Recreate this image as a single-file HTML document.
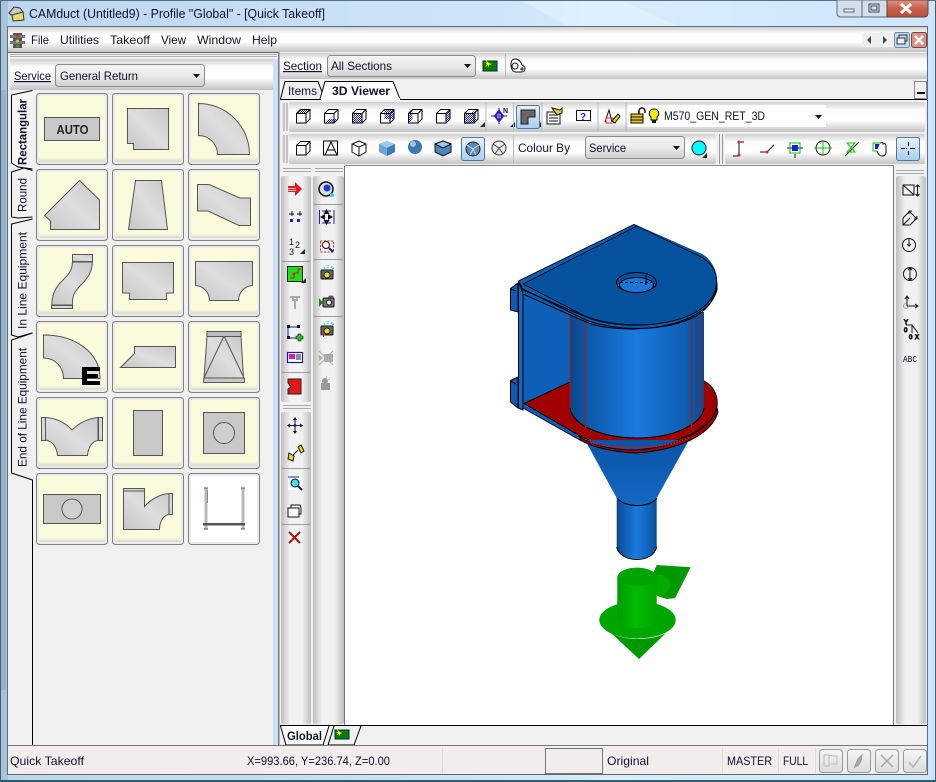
<!DOCTYPE html>
<html><head><meta charset="utf-8"><title>CAMduct</title>
<style>html,body{margin:0;padding:0;background:#cfe4f7;width:936px;height:782px;overflow:hidden}
svg{display:block;position:absolute;left:0;top:0}
text{font-family:"Liberation Sans",sans-serif;font-size:12px;fill:#10102a}</style></head><body>
<svg width="936" height="782" viewBox="0 0 936 782" xmlns="http://www.w3.org/2000/svg">
<defs>
<pattern id="dith" width="2" height="2" patternUnits="userSpaceOnUse"><rect width="2" height="2" fill="#fff"/><rect width="1" height="1" fill="#1414d8"/><rect x="1" y="1" width="1" height="1" fill="#1414d8"/></pattern>
<linearGradient id="glass" x1="0" y1="0" x2="1" y2="0"><stop offset="0" stop-color="#bcd6ee"/><stop offset=".3" stop-color="#c6def4"/><stop offset=".55" stop-color="#cfe5f9"/><stop offset=".65" stop-color="#d8ecfd"/><stop offset="1" stop-color="#cfe5fb"/></linearGradient>
<linearGradient id="hbar" x1="0" y1="0" x2="0" y2="1"><stop offset="0" stop-color="#cfcfcf"/><stop offset=".25" stop-color="#fbfbfb"/><stop offset=".6" stop-color="#fff"/><stop offset="1" stop-color="#c4c4c4"/></linearGradient>
<linearGradient id="vbar" x1="0" y1="0" x2="1" y2="0"><stop offset="0" stop-color="#bdbdbd"/><stop offset=".3" stop-color="#f1f1f1"/><stop offset=".7" stop-color="#f1f1f1"/><stop offset="1" stop-color="#bdbdbd"/></linearGradient>
<linearGradient id="combo" x1="0" y1="0" x2="0" y2="1"><stop offset="0" stop-color="#f4f4f4"/><stop offset=".5" stop-color="#eaeaea"/><stop offset="1" stop-color="#cfcfcf"/></linearGradient>
<linearGradient id="gs" x1="0" y1="1" x2="1" y2="0"><stop offset="0" stop-color="#c6c6c6"/><stop offset=".5" stop-color="#dedede"/><stop offset="1" stop-color="#c8c8c8"/></linearGradient>
<linearGradient id="yb" x1="0" y1="0" x2="0" y2="1"><stop offset="0" stop-color="#fafadc"/><stop offset=".93" stop-color="#fafadc"/><stop offset="1" stop-color="#d8d8d0"/></linearGradient>
<linearGradient id="cyl" x1="0" y1="0" x2="1" y2="0"><stop offset="0" stop-color="#094685"/><stop offset=".12" stop-color="#0d57a6"/><stop offset=".5" stop-color="#1b7ade"/><stop offset=".85" stop-color="#0f5fb3"/><stop offset="1" stop-color="#0a4b90"/></linearGradient>
<linearGradient id="cone" x1="0" y1="0" x2="0" y2="1"><stop offset="0" stop-color="#0a54a6"/><stop offset="1" stop-color="#1468c2"/></linearGradient>
<linearGradient id="gc" x1="0" y1="0" x2="1" y2="0"><stop offset="0" stop-color="#009a00"/><stop offset=".45" stop-color="#00bc00"/><stop offset="1" stop-color="#00a400"/></linearGradient>
<linearGradient id="act" x1="0" y1="0" x2="0" y2="1"><stop offset="0" stop-color="#e8f2fb"/><stop offset="1" stop-color="#a8cdec"/></linearGradient>
<linearGradient id="sb" x1="0" y1="0" x2="0" y2="1"><stop offset="0" stop-color="#f6f6f6"/><stop offset="1" stop-color="#dcdcdc"/></linearGradient>
<linearGradient id="red" x1="0" y1="0" x2="0" y2="1"><stop offset="0" stop-color="#e09488"/><stop offset=".5" stop-color="#c8604c"/><stop offset="1" stop-color="#b84c3a"/></linearGradient>
<g id="btn"><rect x=".5" y=".5" width="71" height="71" rx="3" fill="#ececec" stroke="#808080"/><rect x="3" y="3" width="66" height="66" fill="url(#yb)"/></g>
<g id="cube" fill="none" stroke="#000"><path d="M-6.500 -2.500h9.500v9.500h-9.500zM-6.500 -2.500l4-4h9.500v9.500l-4 4M3 -2.500l4-4"/></g>
</defs>

<rect width="936" height="782" fill="url(#glass)"/>
<path d="M520 0h100l60 27h-110z" fill="#e2f1fe" opacity=".6"/>
<rect x="0" y="0" width="8" height="782" fill="#a9c3db"/>
<rect x="1" y="90" width="5" height="600" fill="#8ea6bc" opacity=".6"/>
<rect x="0" y="0" width="1" height="782" fill="#46606e"/>
<rect x="935" y="0" width="1" height="782" fill="#46606e"/>
<rect x="0" y="780" width="936" height="2" fill="#2a6070"/>
<rect x="0" y="0" width="936" height="1" fill="#56707e"/>

<path d="M9 13l5-6 6 1 3 4-2 3H11z" fill="#c8c8c8" stroke="#333"/><path d="M12 15l11-3 1 8-11 1z" fill="#e6dc6a" stroke="#333"/>
<text x="29" y="18" style="font-size:12.5px" textLength="296" lengthAdjust="spacingAndGlyphs">CAMduct (Untitled9) - Profile "Global" - [Quick Takeoff]</text>

<path d="M837 0h25v17h-21q-4 0-4-4z" fill="#d3dee9" stroke="#5c6f80"/>
<rect x="844" y="9" width="10" height="3" fill="#eef" stroke="#5d6b78"/>
<rect x="862" y="0" width="25" height="17" fill="#d3dee9" stroke="#5c6f80"/>
<rect x="869" y="4" width="10" height="8" fill="none" stroke="#46525e"/><rect x="871" y="6" width="6" height="4" fill="none" stroke="#46525e"/>
<path d="M887 0h41v13q0 4-4 4h-37z" fill="url(#red)" stroke="#5c4444"/>
<path d="M901 4l10 9M911 4l-10 9" stroke="#fff" stroke-width="3"/>

<rect x="7.500" y="26.500" width="920" height="748" fill="#f0f0f0" stroke="#5f6f7a"/>
<rect x="8" y="27" width="919" height="25" fill="url(#hbar)"/>
<g transform="translate(10,33)"><rect x="3" y="0" width="9" height="15" fill="#555"/><rect x="0" y="2" width="15" height="3" fill="#777"/><rect x="0" y="8" width="15" height="3" fill="#777"/><circle cx="7.500" cy="3" r="1.500" fill="#c33"/><circle cx="7.500" cy="8" r="1.500" fill="#cc3"/><circle cx="7.500" cy="13" r="1.500" fill="#3a3"/></g>
<text x="31" y="44" textLength="18" lengthAdjust="spacingAndGlyphs">File</text>
<text x="60" y="44" textLength="39" lengthAdjust="spacingAndGlyphs">Utilities</text>
<text x="110" y="44" textLength="40" lengthAdjust="spacingAndGlyphs">Takeoff</text>
<text x="161" y="44" textLength="25" lengthAdjust="spacingAndGlyphs">View</text>
<text x="197" y="44" textLength="44" lengthAdjust="spacingAndGlyphs">Window</text>
<text x="252" y="44" textLength="25" lengthAdjust="spacingAndGlyphs">Help</text>
<rect x="862" y="33" width="32" height="14" fill="#efefef"/>
<path d="M871 36v8l-4-4zM883 36v8l4-4z" fill="#444"/>
<rect x="894.500" y="32.500" width="15" height="15" rx="2" fill="#c6dcf0" stroke="#6e8aa4"/>
<rect x="899" y="35" width="8" height="6" fill="none" stroke="#333"/><rect x="897" y="38" width="8" height="6" fill="#e8f0f8" stroke="#333"/>
<rect x="911.500" y="32.500" width="15" height="15" rx="2" fill="#d88f84" stroke="#7a4a4a"/>
<path d="M915 36l8 8M923 36l-8 8" stroke="#fff" stroke-width="2.500"/>

<!-- left panel -->
<rect x="8" y="52" width="270" height="693" fill="#f0f0f0"/>
<path d="M8 52.500H279" stroke="#666"/>
<path d="M10 54.500h267M10 56.500h267" stroke="#b0b0b0"/>
<rect x="10" y="59" width="263" height="31" fill="url(#hbar)"/>
<text x="14" y="80" textLength="37" lengthAdjust="spacingAndGlyphs" text-decoration="underline">Service</text>
<rect x="55.500" y="64.500" width="149" height="22" rx="3" fill="url(#combo)" stroke="#8a8a8a"/>
<text x="60" y="80" textLength="78" lengthAdjust="spacingAndGlyphs">General Return</text>
<path d="M193 74h7l-3.500 4z" fill="#111"/>
<rect x="273" y="59" width="5" height="686" fill="#cbe1f6"/>
<rect x="278" y="52" width="1.500" height="693" fill="#777"/>

<!-- tabs -->
<path d="M32.500 90.500L11.500 95V163L18 167L32.500 169" fill="#f4f4f4" stroke="#000"/>
<path d="M32.500 170.500L24 168L11.500 172V217L18 218L32.500 217" fill="#f0f0f0" stroke="#000"/>
<path d="M32.500 219L11.500 224V335L18 337L32.500 333" fill="#f0f0f0" stroke="#000"/>
<path d="M32.500 333L11.500 340V473L32.500 480V745" fill="#f0f0f0" stroke="#000"/>
<text transform="translate(26.500,165) rotate(-90)" textLength="66" lengthAdjust="spacingAndGlyphs" style="font-weight:bold">Rectangular</text>
<text transform="translate(26.500,212) rotate(-90)" textLength="34" lengthAdjust="spacingAndGlyphs">Round</text>
<text transform="translate(26.500,329) rotate(-90)" textLength="97" lengthAdjust="spacingAndGlyphs">In Line Equipment</text>
<text transform="translate(26.500,467) rotate(-90)" textLength="119" lengthAdjust="spacingAndGlyphs">End of Line Equipment</text>

<use href="#btn" x="36" y="93"/><use href="#btn" x="112" y="93"/><use href="#btn" x="188" y="93"/>
<use href="#btn" x="36" y="169"/><use href="#btn" x="112" y="169"/><use href="#btn" x="188" y="169"/>
<use href="#btn" x="36" y="245"/><use href="#btn" x="112" y="245"/><use href="#btn" x="188" y="245"/>
<use href="#btn" x="36" y="321"/><use href="#btn" x="112" y="321"/><use href="#btn" x="188" y="321"/>
<use href="#btn" x="36" y="397"/><use href="#btn" x="112" y="397"/><use href="#btn" x="188" y="397"/>
<use href="#btn" x="36" y="473"/><use href="#btn" x="112" y="473"/>
<rect x="188.500" y="473.500" width="71" height="71" rx="3" fill="#ececec" stroke="#808080"/><rect x="191" y="476" width="66" height="66" fill="#fff"/>
<g fill="url(#gs)" stroke="#555" stroke-width="1">
<rect x="44.500" y="117.500" width="55" height="23" fill="#c8c8c8"/>
<path d="M127.500 108.500H168.500V149.500H133.500V143.500H127.500Z"/>
<path d="M198.500 103.500A51 51 0 0 1 249.500 154.500H217.500A19 19 0 0 0 198.500 135.500Z"/>
<path d="M44.500 215.500L79.500 180.500L99.500 200V229.500H50.500V221Z"/>
<path d="M135.500 180.500H161.500L167.500 229.500H128.500Z"/>
<path d="M197.500 184.500H209L240 198H250.500V225.500H239L208 211H197.500Z"/>
<path d="M72.500 262C72 272 68 275 60 283C54 290 52 296 51.700 305H72.500C72 297 74 292 80 286C88 278 92 272 92.500 262Z"/>
<rect x="72.500" y="254.500" width="20" height="7"/><rect x="51.500" y="305.500" width="21" height="3"/>
<path d="M122.500 262.500H173.500V293H166.500V299.500H129.500V293H122.500Z"/>
<path d="M195.500 261.500H252.500V285.500C245 286 238.500 292 238.500 300.500H209.500C209.500 292 203 286 195.500 285.500Z"/>
<path d="M43.500 335C75 335 100 352 100 378.500H63.500C63.500 367 55 358 43.500 358Z"/>
<path d="M134.500 346.500H175.500V367.500H120.500L134.500 353.500Z"/>
<path d="M207 336H241L243.500 378H204Z"/><rect x="207" y="331.500" width="34" height="5" fill="#bdbdbd"/>
<path d="M224 336L204 378M224 336L244 378" fill="none"/><rect x="203.500" y="378" width="41" height="4.500" rx="1" fill="#c8c8c8"/>
<path d="M45.500 417.500C55 418 65 422 72 430C80 422 90 418 98 417.500V440.500C92 441 88 448 87.500 455.500H57.500C57 447 52 441 45.500 440Z"/>
<rect x="41.500" y="417.500" width="4" height="23"/><rect x="98.500" y="417.500" width="4" height="23"/>
<rect x="133.500" y="410.500" width="29" height="45" fill="#c8c8c8"/>
<rect x="203.500" y="412.500" width="41" height="41" fill="#c8c8c8"/><circle cx="224" cy="433" r="10.500" fill="#cfcfcf"/>
<rect x="43.500" y="494.500" width="57" height="29" fill="#c8c8c8"/><circle cx="72" cy="509" r="10" fill="#cfcfcf"/>
<path d="M123.500 490.500V529.500H159.500C159.500 521 164 515 169 514.500H172.500V493.500H169C160 494 150 500 144.500 506.500V490.500Z"/>
<rect x="123.500" y="488.500" width="21" height="2.500"/><rect x="169" y="493.500" width="3.500" height="21"/>
</g>
<text x="56.500" y="134" textLength="32" lengthAdjust="spacingAndGlyphs" style="font-weight:bold;font-size:13px;fill:#222">AUTO</text>
<path d="M82 367h18v4h-13v3h11v4h-11v3h13v4h-18z" fill="#000"/>
<path d="M206 488v41M243 488v41" stroke="#b8b8b8" stroke-width="3"/><path d="M204 488h4M241 488h4M204 529h4M241 529h4" stroke="#555"/>
<rect x="203" y="523" width="42" height="2.500" fill="#555"/><path d="M207.500 490v13" stroke="#6a8cb0"/>

<!-- Section row -->
<rect x="280" y="53" width="647" height="26" fill="url(#hbar)"/>
<text x="283" y="70" textLength="39" lengthAdjust="spacingAndGlyphs" text-decoration="underline">Section</text>
<rect x="327.500" y="55.500" width="148" height="21" rx="3" fill="url(#combo)" stroke="#8a8a8a"/>
<text x="331" y="70" textLength="61" lengthAdjust="spacingAndGlyphs">All Sections</text>
<path d="M464 64h7l-3.500 4z" fill="#111"/>
<path d="M505.500 54v25" stroke="#bbb"/>
<rect x="483" y="61" width="14" height="10" fill="#0a7a0a" stroke="#033"/><path d="M486 60l1 3-3-1 3 2-2 3 3-2 1 3v-3l3-1-3-1z" fill="#ff0"/>
<path d="M515 59c4 0 6 3 7 6 3 1 3 3 3 4 0 2-2 3-4 3h-5c-3 0-5-3-5-7 0-4 1-6 4-6z" fill="#fff" stroke="#111"/><circle cx="515" cy="66" r="3" fill="none" stroke="#111"/><circle cx="522" cy="69" r="1" fill="none" stroke="#111"/>

<!-- tab row -->
<rect x="280" y="79" width="647" height="21" fill="#f0f0f0"/>
<path d="M280 99.500H927" stroke="#000"/>
<path d="M280.500 99L285 81.500H318L322 92" fill="#f0f0f0" stroke="#000"/>
<path d="M320 99L325 81.500H393L400 99" fill="#fff" stroke="#000"/>
<rect x="321" y="98" width="79" height="3" fill="#fff"/>
<text x="288" y="95" textLength="29" lengthAdjust="spacingAndGlyphs">Items</text>
<text x="332" y="95" textLength="58" lengthAdjust="spacingAndGlyphs" style="font-weight:bold">3D Viewer</text>
<rect x="914.500" y="81.500" width="12" height="17" fill="#f0f0f0" stroke="#888"/><rect x="917" y="92" width="8" height="2" fill="#000"/>

<!-- toolbars -->
<rect x="280" y="100" width="647" height="66" fill="#efefef"/>
<path d="M284 103v28M287 103v28M284 135v28M287 135v28" stroke="#999"/>
<rect x="289" y="102" width="636" height="30" rx="2" fill="url(#hbar)"/>
<rect x="289" y="134" width="427" height="30" rx="2" fill="url(#hbar)"/>
<rect x="725" y="134" width="200" height="30" rx="2" fill="url(#hbar)"/>
<path d="M719.500 134v30M722.500 134v30" stroke="#999"/>
<!-- hatched cubes -->
<path d="M296.500 113.500l4-4h9.500l-4 4z" fill="url(#dith)"/><use href="#cube" x="303" y="116"/>
<path d="M324.500 123l4-4h9.500l-4 4z" fill="url(#dith)"/><use href="#cube" x="331" y="116"/>
<rect x="352.500" y="113.500" width="9.500" height="9.500" fill="url(#dith)"/><use href="#cube" x="359" y="116"/>
<rect x="384.500" y="109.500" width="9.500" height="9.500" fill="url(#dith)"/><use href="#cube" x="387" y="116"/>
<path d="M408.500 113.500l4-4v9.500l-4 4z" fill="url(#dith)"/><use href="#cube" x="415" y="116"/>
<path d="M446 113.500l4-4v9.500l-4 4z" fill="url(#dith)"/><use href="#cube" x="443" y="116"/>
<path d="M465 113h6l5 -3v10l-5 4h-6z" fill="url(#dith)"/><use href="#cube" x="471" y="116"/>
<path d="M480 127h5v-5zM510 127h5v-5zM536 127h5v-5z" fill="#222"/>
<path d="M486 103v28M513.500 103v28M542 103v28M598 103v28M626 103v28" stroke="#bbb"/>
<path d="M499 108v16M491 116h16" stroke="#1a1ad0"/><path d="M499 111l4 5-4 5-4-5z" fill="none" stroke="#1a1ad0" stroke-width="2"/><circle cx="499" cy="116" r="1.500" fill="#e22"/><text x="503" y="113" style="font-size:7px;font-weight:bold">N</text>
<rect x="516.500" y="105.500" width="23" height="23" rx="2" fill="url(#act)" stroke="#4a7ba8"/>
<path d="M521 110h14v7h-7v7h-7z" fill="#666" stroke="#222"/><path d="M523 113l3 2" stroke="#e22"/>
<path d="M547 112h13v12h-13z" fill="#fff" stroke="#111"/><path d="M549 115h9M549 118h9M549 121h9" stroke="#111"/><path d="M552 108l8 2 2-2v5l-5 2z" fill="#e6c820" stroke="#111"/>
<rect x="576.500" y="110.500" width="14" height="10" fill="#fff" stroke="#111"/><text x="580" y="120" style="font-size:10px;font-weight:bold;fill:#1a1ae0">?</text>
<path d="M605 122l4-12 3 12" fill="none" stroke="#111"/><path d="M606 118h7v5h-7z" fill="none" stroke="#e22"/><path d="M612 121l6-7 2 2-5 7z" fill="#ecd820" stroke="#111"/>
<rect x="628" y="105" width="198" height="22" fill="#fff"/>
<rect x="631" y="114" width="12" height="9" fill="#e8c820" stroke="#111"/><path d="M631 117h12M631 120h12" stroke="#111"/><path d="M639 114v-3c0-4 6-4 6 0v2" fill="none" stroke="#111" stroke-width="1.500"/>
<path d="M654 109a4.500 4.500 0 0 1 3 8v3h-6v-3a4.500 4.500 0 0 1 3-8z" fill="#f4e818" stroke="#111"/><rect x="652" y="120" width="4" height="3" fill="#111"/>
<text x="664" y="120" textLength="101" lengthAdjust="spacingAndGlyphs">M570_GEN_RET_3D</text>
<path d="M815 115h7l-3.500 4z" fill="#111"/>

<!-- row 2 -->
<use href="#cube" x="303" y="148"/>
<g fill="none" stroke="#000"><rect x="323.500" y="141" width="14" height="14"/><path d="M325 155l6-13 6 13M327 150h8"/></g>
<path d="M359 141l7 3v8l-7 4-7-4v-8zM352 144l7 3 7-3M359 147v9" fill="#fff" stroke="#111"/>
<path d="M387 141l8 3v8l-8 4-8-4v-8z" fill="#6aa4d8"/><path d="M379 144l8 4 8-4-8-3z" fill="#9cc8ea"/><path d="M387 148v8l8-4v-8z" fill="#3e7ab4"/>
<circle cx="415" cy="147" r="7" fill="#3a78b0"/><circle cx="413" cy="144" r="3" fill="#9cc4e4"/>
<path d="M443 141l8 3v8l-8 4-8-4v-8z" fill="#4a88bc" stroke="#111"/><path d="M435 144l8 4 8-4-8-3z" fill="#9cc8ea" stroke="#111"/>
<rect x="461.500" y="137.500" width="23" height="23" rx="2" fill="url(#act)" stroke="#4a7ba8"/>
<circle cx="473" cy="149" r="7" fill="#5a8ab4" stroke="#222"/><path d="M467 145l6 4 6-4M473 149l-3 6M473 149l3 6" stroke="#cfe0ee" fill="none"/>
<circle cx="499" cy="148" r="7" fill="#ececec" stroke="#333"/><path d="M493 144l6 4 6-4M499 148l-4 6M499 148l4 6" stroke="#444" fill="none"/>
<path d="M513.500 135v28" stroke="#bbb"/>
<text x="518" y="152" textLength="52" lengthAdjust="spacingAndGlyphs">Colour By</text>
<rect x="585.500" y="136.500" width="99" height="22" rx="3" fill="url(#combo)" stroke="#8a8a8a"/>
<text x="589" y="152" textLength="37" lengthAdjust="spacingAndGlyphs">Service</text>
<path d="M673 146h7l-3.500 4z" fill="#111"/>
<circle cx="699" cy="148" r="7" fill="#0ff" stroke="#111"/>
<path d="M702 158h5v-5z" fill="#222"/>
<g fill="none" stroke="#111">
<path d="M739 142v14M739 142h5M733 156h6"/><circle cx="739" cy="142" r="1" fill="#e22" stroke="#e22"/><circle cx="739" cy="155" r="1" fill="#e22" stroke="#e22"/>
<path d="M760 152h7l7-7"/><circle cx="767" cy="152" r="1" fill="#e22" stroke="#e22"/>
<path d="M787 148h16M795 154v4"/><rect x="792" y="145" width="6" height="6" fill="#1a1ae0" stroke="none"/><rect x="790" y="143" width="10" height="10" stroke="#0c0"/>
<circle cx="823" cy="148" r="7"/><path d="M814 148h18M823 141v14" stroke="#0c0"/>
<path d="M845 156l14-14"/><path d="M847 143h8l-8 9h8z" stroke="#0c0"/>
<rect x="873" y="143" width="9" height="8" stroke="#0c0"/><rect x="875" y="144" width="5" height="5" fill="#1a1ae0" stroke="none"/><path d="M880 143c3-1 3 0 3 1 2-1 3 0 3 2v6c0 3-2 4-4 4s-4-2-5-5" fill="#fff"/>
</g>
<rect x="896.500" y="137.500" width="23" height="23" rx="2" fill="url(#act)" stroke="#4a7ba8"/>
<path d="M901 148.500h4M906 148.500h1M910 148.500h5M908.500 142v4M908.500 151v4" stroke="#111"/>

<!-- viewer -->
<rect x="345" y="166" width="549" height="559" fill="#fff"/>
<path d="M344.500 165.500H894" stroke="#888"/>
<rect x="280" y="166" width="65" height="559" fill="#f0f0f0"/>
<rect x="894" y="166" width="33" height="559" fill="#f0f0f0"/>
<path d="M344.500 166V725M893.500 166V725" stroke="#777"/>
<path d="M283 168.500h28M283 171.500h28M315 168.500h28M315 171.500h28M283 405.500h28M283 408.500h28M896 170.500h28M896 173.500h28" stroke="#aaa"/>
<rect x="281" y="176" width="30" height="226" rx="2" fill="url(#vbar)"/>
<rect x="281" y="412" width="30" height="312" rx="2" fill="url(#vbar)"/>
<rect x="313" y="176" width="31" height="548" rx="2" fill="url(#vbar)"/>
<rect x="896" y="176" width="30" height="548" rx="2" fill="url(#vbar)"/>
<path d="M282 261.500h28M282 372.500h28M282 468.500h28M282 524.500h28M314 204.500h29M314 259.500h29M314 316.500h29" stroke="#999"/>

<!-- col 1 icons -->
<path d="M288 186h7v-4l7 7-7 7v-4h-7z" fill="#e01818"/><path d="M288 188.500h8M288 190.500h8" stroke="#fff" stroke-width=".8"/>
<g stroke="#111" fill="none"><path d="M289 214h5M292 211v5M297 214h5M300 211v5"/></g><rect x="290" y="219" width="3" height="3" fill="#1a1ae0"/><rect x="297" y="219" width="3" height="3" fill="#1a1ae0"/>
<text x="289" y="245" style="font-size:9px">1</text><text x="295" y="248" style="font-size:9px">2</text><text x="289" y="255" style="font-size:9px">3</text>
<path d="M300 254h5v-5z" fill="#222"/>
<rect x="287.500" y="266.500" width="15" height="15" fill="#1ce01c" stroke="#222"/><path d="M290 278h4v-5h4v-4h3M292 274h3" fill="none" stroke="#d01010"/><path d="M301 283h5v-5z" fill="#222"/>
<path d="M290 297h10M293 297v3h4v-3M295 300v9" stroke="#aaa" stroke-width="2" fill="none"/>
<path d="M288 327h12M288 327v11h11" stroke="#1a1ad0" fill="none"/><g fill="#111"><rect x="287" y="325" width="3" height="3"/><rect x="297" y="325" width="3" height="3"/><rect x="287" y="336" width="3" height="3"/><rect x="296" y="336" width="3" height="3"/></g><path d="M298 334h3v2h2v3h-2v2h-3v-2h-2v-3h2z" fill="#2ac02a" stroke="#111" stroke-width=".6"/>
<rect x="287.500" y="352.500" width="15" height="10" fill="#fff" stroke="#1a1a90" stroke-width="1.200"/><rect x="289" y="354" width="6" height="5" fill="#e010d0"/><path d="M296 355h5M296 357h5M296 359h5" stroke="#222"/>
<path d="M288 379h13v15h-13v-5l3-2-3-4z" fill="#e01818" stroke="#222"/>
<path d="M295 418v15M288 425.500h15" stroke="#111"/><path d="M295 417l-2 3h4zM295 434l-2-3h4zM287 425.500l3-2v4zM303 425.500l-3-2v4z" fill="#111"/><circle cx="295" cy="425.500" r="1.500" fill="#1a1ae0"/>
<path d="M289 453l5 3-1 5-5-2zM298 447l3-2 3 6-3 2z" fill="#ecd820" stroke="#111"/><path d="M293 455l5-5" stroke="#111"/>
<rect x="288" y="476" width="14" height="14" fill="#fff"/><path d="M288 477h11" stroke="#1a1ad0"/><circle cx="295" cy="483" r="4" fill="#4cd8e8" stroke="#111"/><path d="M298 486l4 4" stroke="#1a1a80" stroke-width="2"/>
<path d="M288 508h11v9h-11zM291 508v-3h9l1 3v6h-2" fill="#fff" stroke="#111"/>
<path d="M289 532l11 11M300 532l-11 11" stroke="#a01818" stroke-width="2"/>

<!-- col 2 icons -->
<circle cx="326" cy="189" r="7" fill="#ddd" stroke="#111" stroke-width="1.500"/><circle cx="327" cy="188" r="3.500" fill="#1a3ad8"/><circle cx="332" cy="195" r="2" fill="#2cd0e0"/>
<path d="M319.500 210v14M334 210v14M322 211h9M322 223h9" stroke="#1a1ad0" fill="none"/><path d="M326.500 209l-3 5h6zM326.500 225l-3-5h6zM320 217l5-3v6zM333 217l-5-3v6z" fill="#111"/>
<rect x="320.500" y="241" width="13" height="11" fill="none" stroke="#e01818" stroke-dasharray="2 1.500"/><circle cx="326" cy="245" r="3.500" fill="#fff" stroke="#111"/><path d="M329 248l4 4" stroke="#1a1a80" stroke-width="2"/>
<g id="cam"><rect x="321" y="270" width="12" height="9" rx="1" fill="#666" stroke="#111"/><circle cx="327" cy="275" r="3" fill="#f0e010" stroke="#111"/><path d="M324 267l1 2M328 265v3M332 266l-1 2M334 268l-2 1" stroke="#2cd8e8"/></g>
<rect x="323" y="298" width="11" height="9" rx="1" fill="#777" stroke="#111"/><circle cx="329" cy="302.500" r="2.500" fill="#fff" stroke="#111"/><path d="M319 298v9l4-4.500z" fill="#118a11"/><rect x="329" y="296" width="4" height="2" fill="#777" stroke="#111" stroke-width=".5"/>
<use href="#cam" y="56"/><path d="M322 335h3M323.500 334v3" stroke="#e01818"/>
<g stroke="#aaa" fill="none"><path d="M319 351l14 14M333 351l-14 14"/></g><rect x="324" y="354" width="9" height="8" fill="#aaa"/><path d="M319 355v6l4-3z" fill="#aaa"/>
<rect x="321" y="383" width="9" height="7" fill="#999"/><circle cx="325" cy="381" r="3" fill="#999"/><path d="M326 376l1 2M330 379l-2 1" stroke="#bbb"/>

<!-- right icons -->
<g fill="none" stroke="#111">
<path d="M903 185h11v10h-11zM903 185l11 10"/><path d="M917.500 185v11M915.500 187l2-2 2 2M915.500 194l2 2 2-2"/>
<path d="M903 218l6-6M903 218v7h7l6-6"/><path d="M909 211l8 8M909 211h3M909 211v3M917 219h-3M917 219v-3M903 225l7-7"/>
<circle cx="909" cy="245" r="6.500"/><path d="M909 239v7l-2-2M909 246l2-2"/>
<circle cx="910" cy="274" r="6.500"/><path d="M910 268v12M908 270l2-2 2 2M908 278l2 2 2-2"/>
<path d="M907 306h10M907 306v-9"/><path d="M915 304l3 2-3 2M905 299l2-3 2 3"/><circle cx="906" cy="306" r="2.500" stroke="#999"/>
<path d="M906 325h6v8M912 325l6 8"/><text x="904" y="324" style="font-size:6px">Y</text><text x="904" y="332" style="font-size:6px">0</text><text x="909" y="339" style="font-size:6px">0</text><text x="915" y="339" style="font-size:6px">X</text>
</g>
<text x="903" y="362" textLength="14" lengthAdjust="spacingAndGlyphs" style="font-size:9.500px;font-family:'Liberation Mono',monospace">ABC</text>

<!-- 3D model -->
<path d="M518 283L510.500 288.500V310L518 312Z" fill="#0d5cb0" stroke="#000"/><path d="M510.500 289L516 291" stroke="#000"/>
<path d="M518 377L510.500 380.500V402L518 408Z" fill="#0d5cb0" stroke="#000"/><path d="M510.500 381L516 384" stroke="#000"/>
<path d="M518 281L590 318L575 385L523 408Z" fill="#0d5fb8"/>
<path d="M523 404L572 381L704 381C715 387 718 397 717 407C712 428 680 445 636 448C612 448 595 444 580 436Z" fill="#a00000" stroke="#000"/>
<!-- neck then cone -->
<path d="M616.700 492H656.700V547C656 553 648 559 636.700 559C625 559 617 553 616.700 547Z" fill="url(#cyl)"/>
<path d="M616.700 547C618 554 626 559.500 636.700 559.500C648 559.500 655 554 656.700 547" fill="none" stroke="#000"/>
<path d="M585 440L689 440L656.700 498C650 505 624 508.500 616.700 498Z" fill="url(#cone)"/>
<path d="M617 498C625 508 650 508 657 498" fill="none" stroke="#000"/>
<!-- flange rim -->
<path d="M580 437C595 447 615 450 636 450C680 447 712 428 717 408L718 412C712 434 680 450 636 453C612 452 592 447 580 440Z" fill="#a00000" stroke="#000"/>
<path d="M590 442C610 449 660 452 690 437" fill="none" stroke="#e01010" stroke-width="1.500" stroke-dasharray="2 1"/>
<!-- cylinder -->
<path d="M570 312H704V408C702 425 672 438 637 438C602 438 572 425 570 408Z" fill="url(#cyl)"/>
<path d="M570 408C572 425 602 438 637 438C672 438 702 425 704 408" fill="none" stroke="#000"/>
<path d="M570 312V408M585.500 318V428M691.500 318V428M700 316V415" stroke="#b01818" fill="none"/>
<!-- side plate -->
<path d="M518.500 281V408L523 410V290Z" fill="#1468c0" stroke="#000"/>
<path d="M523 408L580 440V436L523 403Z" fill="#0d5fb8" stroke="#000"/>
<!-- top plate -->
<path d="M518.500 281L523 290L586 317C610 327 665 332 700 308C710 302 716 296 717 283V290C714 300 708 307 698 313C665 333 610 332 586 322L523 294Z" fill="#0d5fb8" stroke="#000"/>
<path d="M634 224.500L703 255C712 261 717 272 716.700 283C715 297 708 304 698 311C665 330 615 327 586 316.500L518.500 281Z" fill="#07529f" stroke="#07529f"/>
<path d="M518.500 281L634 224.500L637 226.500L523 284Z" fill="#0d5fb8"/>
<path d="M523 284L637 226M518.500 281L634 224.500L703 258C712 264 717 272 716.700 283C715 297 708 304 698 311C665 330 615 327 586 316.500L523 284" fill="none" stroke="#000" stroke-width=".8"/>
<path d="M523 289L586 320C615 331 665 333 698 315C708 308 714 300 716 290" fill="none" stroke="#000"/>
<ellipse cx="636.500" cy="282.500" rx="20" ry="10" fill="#07529f" stroke="#000"/>
<ellipse cx="636.500" cy="285" rx="17" ry="7.500" fill="#1b78da" stroke="#000"/>
<path d="M620 282.500h32" stroke="#000" stroke-dasharray="3 2"/><path d="M646 275v10" stroke="#000"/>

<!-- green part -->
<path d="M651.700 576.700L656.700 565L690.700 567.300L675 598.300L666.700 599L657 596Z" fill="#009a00"/>
<path d="M655 576C662 572 670 578 670 586C668 594 660 597 655 594Z" fill="#00ac00"/>
<ellipse cx="637.500" cy="620" rx="38.200" ry="18.500" fill="#00a600"/>
<path d="M611 633C625 641 652 641 666 633L639 659Z" fill="#009800"/>
<path d="M617.300 578C617.300 572 626 567.700 637 567.700C648 567.700 656.700 572 656.700 578V620C650 631 625 631 617.300 620Z" fill="url(#gc)"/>
<path d="M617.300 578C620 586 650 590 656.700 578C656.700 572 648 567.700 637 567.700C626 567.700 617.300 572 617.300 578Z" fill="#00a400"/>

<!-- bottom tabs -->
<rect x="280" y="725" width="647" height="20" fill="#f0f0f0"/>
<path d="M280 725.500H927" stroke="#000"/>
<path d="M329 726L323 745H286L280.500 726" fill="#fff" stroke="#000"/>
<path d="M334 726L328 745H354L361 726" fill="#f0f0f0" stroke="#000"/>
<text x="287" y="740" textLength="35" lengthAdjust="spacingAndGlyphs" style="font-weight:bold">Global</text>
<rect x="335" y="730" width="14" height="9" fill="#0a7a0a" stroke="#033"/><path d="M337 729l1 3-2 0 2 1-1 2 2-1 1 2v-2l2-1-2-1z" fill="#ff0"/>

<!-- status -->
<rect x="8" y="745" width="919" height="29" fill="#f0edec"/>
<path d="M8 745.500H927" stroke="#777"/>
<path d="M8 774.500H928" stroke="#666"/>
<text x="10" y="765" textLength="74" lengthAdjust="spacingAndGlyphs">Quick Takeoff</text>
<text x="247" y="765" textLength="143" lengthAdjust="spacingAndGlyphs">X=993.66, Y=236.74, Z=0.00</text>
<path d="M442.500 748v25M722.500 748v25M778.500 748v25M815.500 748v25" stroke="#dcd9d8"/>
<rect x="545.500" y="748.500" width="57" height="25" fill="#f0edec" stroke="#777"/>
<text x="607" y="765" textLength="42" lengthAdjust="spacingAndGlyphs">Original</text>
<text x="727" y="765" textLength="45" lengthAdjust="spacingAndGlyphs">MASTER</text>
<text x="783" y="765" textLength="25" lengthAdjust="spacingAndGlyphs">FULL</text>
<g stroke="#9a9a9a" fill="url(#sb)">
<rect x="819.500" y="749.500" width="23" height="23" rx="3"/><rect x="847.500" y="749.500" width="23" height="23" rx="3"/><rect x="875.500" y="749.500" width="23" height="23" rx="3"/><rect x="903.500" y="749.500" width="23" height="23" rx="3"/>
</g>
<path d="M824 755h5v11h-5zM829 755l4 1h4v8h-8" fill="none" stroke="#bbb"/>
<path d="M855 766l3-7 4-4-1 6-3 5zM854 768l2-2" fill="#aaa" stroke="#999"/>
<path d="M881 755l12 12M893 755l-12 12" stroke="#a8a8a8" stroke-width="1.500"/>
<path d="M909 762l4 5 8-11" fill="none" stroke="#b4b4b4" stroke-width="1.500"/>
</svg>
</body></html>
